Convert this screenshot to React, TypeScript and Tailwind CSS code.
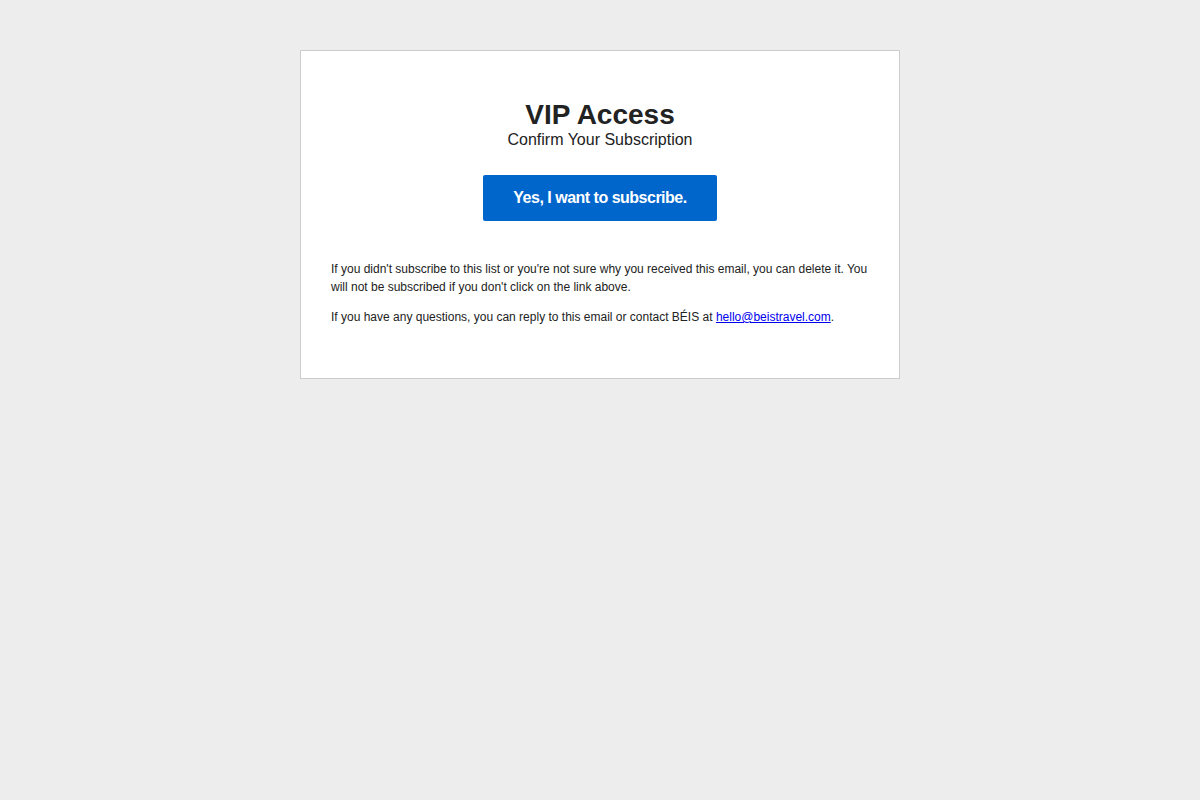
export default function App() {
  return (
    <div className="min-h-[800px] bg-[#ededed] pt-[50px] font-['Liberation_Sans',Arial,sans-serif] text-[#222]">
      <div className="mx-auto w-[600px] border border-[#cccccc] bg-white px-[30px] pt-[48px] pb-[52px]">
        <div className="text-center">
          <h1 className="text-[28px] font-bold leading-[32px]">VIP Access</h1>
          <p className="text-[16px] leading-[18px]">Confirm Your Subscription</p>
          <a
            href="#"
            className="mt-[26px] inline-block h-[46px] w-[234px] rounded-[2px] bg-[#0066cc] text-[16px] font-bold leading-[46px] tracking-[-0.5px] text-white"
          >
            Yes, I want to subscribe.
          </a>
        </div>

        <div className="mt-[39px] text-[12px] leading-[18px]">
          <p>
            If you didn't subscribe to this list or you're not sure why you
            received this email, you can delete it. You will not be subscribed
            if you don't click on the link above.
          </p>
          <p className="mt-[12px]">
            If you have any questions, you can reply to this email or contact
            BÉIS at{" "}
            <a href="#" className="text-[#0000ee] underline">
              hello@beistravel.com
            </a>
            .
          </p>
        </div>
      </div>
    </div>
  );
}
